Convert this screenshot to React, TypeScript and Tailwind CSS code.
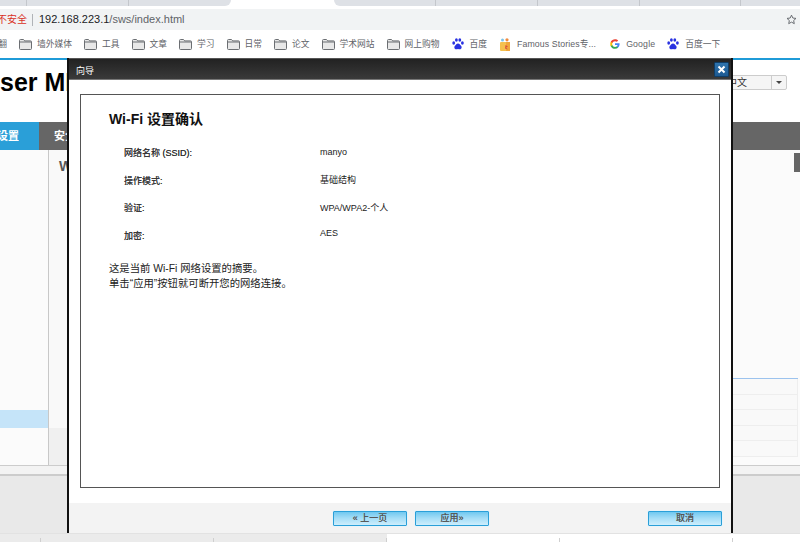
const font = "font-['Liberation_Sans','Noto_Sans_CJK_SC',sans-serif]"

function Folder() {
  return (
    <svg width="13" height="11" viewBox="0 0 13 11" className="shrink-0">
      <path d="M0.5 9.5V1.5a1 1 0 0 1 1-1h3l1.2 1.4h6a.8.8 0 0 1 .8.8v6.8a1 1 0 0 1-1 1H1.500a1 1 0 0 1-1-1z" fill="#e8e8e8" stroke="#6b6e72" />
      <path d="M1 3h11" stroke="#6b6e72" />
    </svg>
  )
}

function Paw() {
  return (
    <svg width="12" height="12" viewBox="0 0 12 12" className="mr-[1px] shrink-0" fill="#2932e1">
      <ellipse cx="1.700" cy="5" rx="1.400" ry="1.700" />
      <ellipse cx="4.400" cy="2" rx="1.400" ry="1.800" />
      <ellipse cx="7.800" cy="2" rx="1.400" ry="1.800" />
      <ellipse cx="10.400" cy="5" rx="1.400" ry="1.700" />
      <path d="M6 5.500c-1.500 0-2 1.500-3 2.300C1.800 8.800 2.300 11.500 4.300 11.300c.7 0 1.100-.3 1.700-.3s1 .3 1.700.3c2 .2 2.500-2.500 1.300-3.500C8 7 7.500 5.500 6 5.500z" />
    </svg>
  )
}

function Gift() {
  return (
    <svg width="12" height="13" viewBox="0 0 12 13" className="mr-[1px] shrink-0">
      <rect x="1" y="4" width="10" height="9" rx="1" fill="#f5c04e" />
      <path d="M7 4h4v9H7z" fill="#f0a63a" />
      <path d="M6.500 7l2.500 1.500-2 1 2 2-3-1z" fill="#d9503f" />
      <circle cx="3.500" cy="2" r="1.500" fill="#7cc4e8" />
      <circle cx="8" cy="1.800" r="1.600" fill="#f08a3c" />
    </svg>
  )
}

function GoogleG() {
  return (
    <svg width="10" height="10" viewBox="0 0 48 48" className="mr-[1px] shrink-0">
      <path fill="#4285F4" d="M46 24.500c0-1.600-.1-3.100-.4-4.500H24v8.500h12.400c-.5 2.900-2.100 5.300-4.600 7v5.800h7.400C43.500 37.800 46 31.700 46 24.500z" />
      <path fill="#34A853" d="M24 47c6.200 0 11.400-2 15.200-5.600l-7.400-5.800c-2 1.400-4.700 2.200-7.800 2.200-6 0-11-4-12.800-9.500H3.600v6C7.400 41.800 15.100 47 24 47z" />
      <path fill="#FBBC05" d="M11.200 28.300c-.5-1.400-.7-2.800-.7-4.300s.3-3 .7-4.300v-6H3.600C2 16.800 1 20.300 1 24s.9 7.200 2.600 10.300l7.600-6z" />
      <path fill="#EA4335" d="M24 10.200c3.400 0 6.400 1.200 8.800 3.400l6.600-6.600C35.400 3.300 30.200 1 24 1 15.100 1 7.400 6.200 3.600 13.700l7.600 6c1.800-5.500 6.800-9.500 12.800-9.500z" />
    </svg>
  )
}

const bookmarks = ["墙外媒体", "工具", "文章", "学习", "日常", "论文", "学术网站", "网上购物"]

function Bookmark({ icon, label }: { icon: React.ReactNode; label: React.ReactNode }) {
  return (
    <div className="flex shrink-0 items-center gap-[5px]">
      {icon}
      <span className="pt-[1px] whitespace-nowrap">{label}</span>
    </div>
  )
}

function WizardRow({ label, value, valueClass }: { label: string; value: string; valueClass?: string }) {
  return (
    <div className="flex h-[27.500px] items-start">
      <div className="w-[196px] pt-[1px] text-[#333] [text-shadow:0_0_0.5px_#444]">{label}</div>
      <div className={`text-[#222] ${valueClass ?? ""}`}>{value}</div>
    </div>
  )
}

function WizardButton({ label }: { label: string }) {
  return (
    <button className="block h-[15px] w-[74px] rounded-[1px] border border-[#2a9fd8] bg-gradient-to-b from-[#6fc8f0] via-[#a6def7] to-[#cdeefc] text-[9px] leading-[13px] text-[#555] shadow-[0_0_0_1px_#e9f4f9] [text-shadow:0_0_0.5px_#555]">
      {label}
    </button>
  )
}

export default function App() {
  return (
    <div className={`${font} relative flex h-[542px] w-[800px] flex-col overflow-hidden bg-white`}>
      {/* tab strip */}
      <div className="flex h-[9px] shrink-0">
        <div className="flex h-[6px] w-[231px] rounded-br-[6px] bg-[#dee1e6]">
          <div className="w-[27px] border-r border-[#c4c7cc]" />
          <div className="w-[102px] border-r border-[#c4c7cc]" />
        </div>
        <div className="w-[103px]" />
        <div className="flex h-[6px] flex-1 rounded-bl-[6px] bg-[#dee1e6]">
          <div className="w-[102px] border-r border-[#c4c7cc]" />
          <div className="w-[102px] border-r border-[#c4c7cc]" />
          <div className="w-[102px] border-r border-[#c4c7cc]" />
          <div className="w-[101px] border-r border-[#c4c7cc]" />
        </div>
      </div>

      {/* address bar */}
      <div className="flex h-[21px] shrink-0 items-center bg-[#f1f3f4] pr-[3px]">
        <span className="ml-[-3px] text-[10px] text-[#d93025]">不安全</span>
        <div className="ml-[5px] h-[12px] w-px bg-[#b0b3b7]" />
        <div className="ml-[6px] flex-1 text-[11px] text-[#202124]">
          192.168.223.1<span className="text-[#5f6368]">/sws/index.html</span>
        </div>
        <svg width="11" height="11" viewBox="0 0 24 24" fill="none" stroke="#5f6368" strokeWidth="2" strokeLinejoin="round">
          <path d="M12 2.500l2.900 6.300 6.900.8-5.100 4.700 1.400 6.800-6.100-3.400-6.100 3.400 1.400-6.800-5.100-4.700 6.900-.8z" />
        </svg>
      </div>

      {/* bookmarks */}
      <div className="flex h-[28px] shrink-0 items-center gap-[12px] overflow-hidden bg-white text-[8.750px] text-[#5f6368]">
        <span className="w-[7px] shrink-0 overflow-hidden pt-[1px] text-right whitespace-nowrap" dir="rtl">翻</span>
        <div className="flex items-center gap-[12px]">
          {bookmarks.map((b) => (
            <Bookmark key={b} icon={<Folder />} label={b} />
          ))}
          <Bookmark icon={<Paw />} label="百度" />
          <Bookmark icon={<Gift />} label={<span className="tracking-[0.1px]">Famous Stories专...</span>} />
          <div className="ml-[2px]">
            <Bookmark icon={<GoogleG />} label={<span className="tracking-[0.15px]">Google</span>} />
          </div>
          <Bookmark icon={<Paw />} label="百度一下" />
        </div>
      </div>

      {/* page behind the dialog */}
      <div className="flex h-[475px] shrink-0 flex-col bg-[#e9e9e9]">
        <div className="h-[2px] bg-[#1f9bd8]" />
        <div className="flex h-[62px] items-start justify-between bg-white pr-[13px]">
          <div className="mt-[8px] ml-[-18px] text-[25px] leading-[28px] font-bold whitespace-nowrap text-black">User MF</div>
          <div className="mt-[15px] flex h-[15px] w-[100px] items-center justify-between rounded-[2px] border border-[#ccc] bg-[#f5f5f5]">
            <span className="ml-[39px] text-[10px] text-[#333]">中文</span>
            <div className="flex h-full w-[15px] items-center justify-center border-l border-[#ccc]">
              <div className="h-0 w-0 border-x-[3px] border-t-[3px] border-x-transparent border-t-[#444]" />
            </div>
          </div>
        </div>
        <div className="flex h-[28px] bg-[#666] text-[11px] font-bold text-white">
          <div className="flex w-[39px] items-center justify-end bg-[#2a9fd8] pr-[20px] whitespace-nowrap">
            <span className="w-[19px] shrink-0 overflow-hidden" dir="rtl">设置</span>
          </div>
          <div className="flex items-center pl-[15px]">安全</div>
        </div>
        <div className="flex h-[316px] border-b border-[#ccc] bg-[#fbfbfb]">
          <div className="flex w-[49px] flex-col border-r border-[#c8c8c8]">
            <div className="h-[260px]" />
            <div className="h-[18px] bg-[#c5e4f9]" />
          </div>
          <div className="flex w-[18px] flex-col">
            <div className="h-[278px] bg-[#f9f9f9] pt-[8px] pl-[10px] text-[14px] leading-[16px] font-bold text-[#555]">W</div>
            <div className="flex-1 bg-[#f0f0f0]" />
          </div>
        </div>
        <div className="h-[10px] border-b-2 border-[#ccc] bg-[#f3f3f3]" />
      </div>

      {/* bottom strip */}
      <div className="flex flex-1 items-end border-t border-[#e2e2e2] bg-[linear-gradient(to_right,#ebebeb_387px,#ffffff_387px)]">
        {[41, 173, 173, 173, 173].map((w, i) => (
          <div key={i} className={`h-[4px] border-r border-[#cfcfcf] ${w === 41 ? "w-[41px]" : "w-[173px]"}`} />
        ))}
      </div>

      {/* right side pieces showing past the dialog */}
      <div className="absolute top-[153px] left-[733px] flex h-[19px] w-[67px] justify-end">
        <div className="h-full w-[6px] bg-[#666]" />
      </div>
      <div className="absolute top-[378px] left-[733px] w-[65px] border-t border-[#9cc3ee]">
        {[0, 1, 2, 3, 4].map((i) => (
          <div key={i} className="h-[15.500px] border-r border-b border-[#eee] bg-[#f9f9f9]" />
        ))}
      </div>

      {/* wizard dialog */}
      <div className="absolute top-[58px] left-[67px] flex h-[475px] w-[666px] flex-col border-x-2 border-[#111] bg-white">
        <div className="flex h-[22px] shrink-0 items-center justify-between border-t border-b border-t-[#555] border-b-[#777] bg-gradient-to-b from-[#222] to-[#3a3a3a] pr-[2px] pl-[7px] text-[9px] text-white">
          <span className="mt-[6px]">向导</span>
          <div className="flex h-[15px] w-[15px] items-center justify-center rounded-[1px] border border-[#0f3d66] bg-gradient-to-b from-[#2f74ad] to-[#1d5a92]">
            <svg width="9" height="9" viewBox="0 0 9 9" stroke="white" strokeWidth="2">
              <path d="M1.500 1.500l6 6M7.500 1.500l-6 6" />
            </svg>
          </div>
        </div>
        <div className="flex-1 px-[11px] pt-[14px] pb-[15px]">
          <div className="h-full w-[640px] border border-[#555] pt-[15px] pl-[28px]">
            <h1 className="text-[14px] leading-[18px] font-bold text-[#111]">Wi-Fi 设置确认</h1>
            <div className="mt-[18px] pl-[15px] text-[9px] leading-[12px]">
              <WizardRow label="网络名称 (SSID):" value="manyo" />
              <WizardRow label="操作模式:" value="基础结构" />
              <WizardRow label="验证:" value="WPA/WPA2-个人" valueClass="mt-[1px]" />
              <WizardRow label="加密:" value="AES" valueClass="-mt-[2px]" />
            </div>
            <p className="mt-[5px] text-[10.350px] leading-[15px] text-[#222]">
              这是当前 Wi-Fi 网络设置的摘要。
              <br />
              单击“应用”按钮就可断开您的网络连接。
            </p>
          </div>
        </div>
        <div className="flex h-[30px] shrink-0 items-center bg-[#f3f3f3] pr-[9px] pl-[264px]">
          <div className="flex gap-[8px]">
            <WizardButton label="« 上一页" />
            <WizardButton label="应用»" />
          </div>
          <div className="ml-auto">
            <WizardButton label="取消" />
          </div>
        </div>
      </div>
    </div>
  )
}
